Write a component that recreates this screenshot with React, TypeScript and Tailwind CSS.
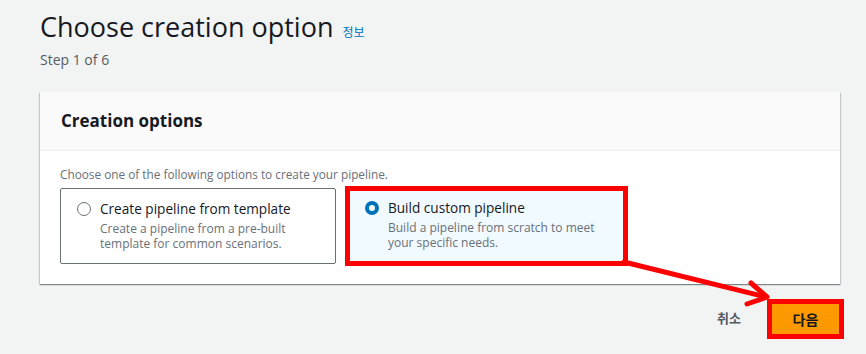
import React from 'react';

const FONT = "font-['Open_Sans','Noto_Sans_CJK_KR',sans-serif]";

type TileProps = {
    title: string;
    description: string;
    selected?: boolean;
};

function Radio({ selected }: { selected?: boolean }) {
    if (selected) {
        return <div className="w-[14px] h-[14px] rounded-full border-[4px] border-[#0073bb] bg-white flex-shrink-0" />;
    }
    return <div className="w-[14px] h-[14px] rounded-full border-[1.5px] border-[#687078] bg-white flex-shrink-0" />;
}

function Tile({ title, description, selected }: TileProps) {
    return (
        <div className="flex items-start gap-[9px]">
            <div className="pt-[3px]">
                <Radio selected={selected} />
            </div>
            <div className="flex flex-col">
                <span className="text-[13.6px] leading-[20px] text-[#16191f]">{title}</span>
                <span className="text-[12px] leading-[15px] text-[#687078] w-[228px] mt-[2px]">{description}</span>
            </div>
        </div>
    );
}

export default function App() {
    return (
        <div className={`${FONT} relative w-[866px] h-[354px] overflow-hidden bg-[#f2f3f3]`}>
            {/* Page header */}
            <div className="pl-10 pt-[8px]">
                <div className="flex items-baseline gap-[9px]">
                    <h1 className="text-[27px] leading-[38px] text-[#16191f]">Choose creation option</h1>
                    <span className="text-[12px] text-[#0073bb]">정보</span>
                </div>
                <p className="text-[14px] leading-[20px] text-[#545b64] mt-[4px]">Step 1 of 6</p>
            </div>

            {/* Card */}
            <div className="ml-10 mt-[22px] w-[800px] bg-white shadow-[0_1px_1px_0_rgba(0,28,36,0.3),1px_1px_1px_0_rgba(0,28,36,0.15),-1px_1px_1px_0_rgba(0,28,36,0.15)]">
                <div className="h-[59px] bg-[#fafafa] border-b border-[#eaeded] px-[21px] flex items-center">
                    <h2 className="text-[17px] font-bold text-[#16191f]">Creation options</h2>
                </div>
                <div className="px-5 pt-[15px] pb-5">
                    <p className="text-[11.8px] leading-[16px] text-[#687078]">
                        Choose one of the following options to create your pipeline.
                    </p>
                    <div className="flex items-center gap-[9px] mt-[4px] -mb-[2px]">
                        <div className="w-[276px] h-[76px] border border-[#687078] rounded-[2px] pl-[16px] pt-[10px]">
                            <Tile
                                title="Create pipeline from template"
                                description="Create a pipeline from a pre-built template for common scenarios."
                            />
                        </div>
                        <div className="w-[283px] h-[80px] border-[5px] border-[#ff0000] bg-[#f1faff] pl-[15px] pt-[7px]">
                            <Tile
                                selected
                                title="Build custom pipeline"
                                description="Build a pipeline from scratch to meet your specific needs."
                            />
                        </div>
                    </div>
                </div>
            </div>

            {/* Footer actions */}
            <div className="flex items-center justify-end gap-[26px] mt-[15px] pr-[22px]">
                <span className="text-[13px] font-bold text-[#545b64]">취소</span>
                <div className="border-[5px] border-[#ff0000] w-[77px] h-[40px]">
                    <div className="w-full h-full bg-[#ff9900] flex items-center justify-center text-[14px] font-bold text-[#16191f]">
                        다음
                    </div>
                </div>
            </div>

            {/* Annotation arrow */}
            <svg className="absolute left-0 top-0 pointer-events-none" width="866" height="354">
                <line x1="624" y1="262" x2="766" y2="297" stroke="#ff0000" strokeWidth="5" strokeLinecap="round" />
                <polyline points="751,283 767,297 747,304" fill="none" stroke="#ff0000" strokeWidth="5" strokeLinecap="round" strokeLinejoin="round" />
            </svg>
        </div>
    );
}
